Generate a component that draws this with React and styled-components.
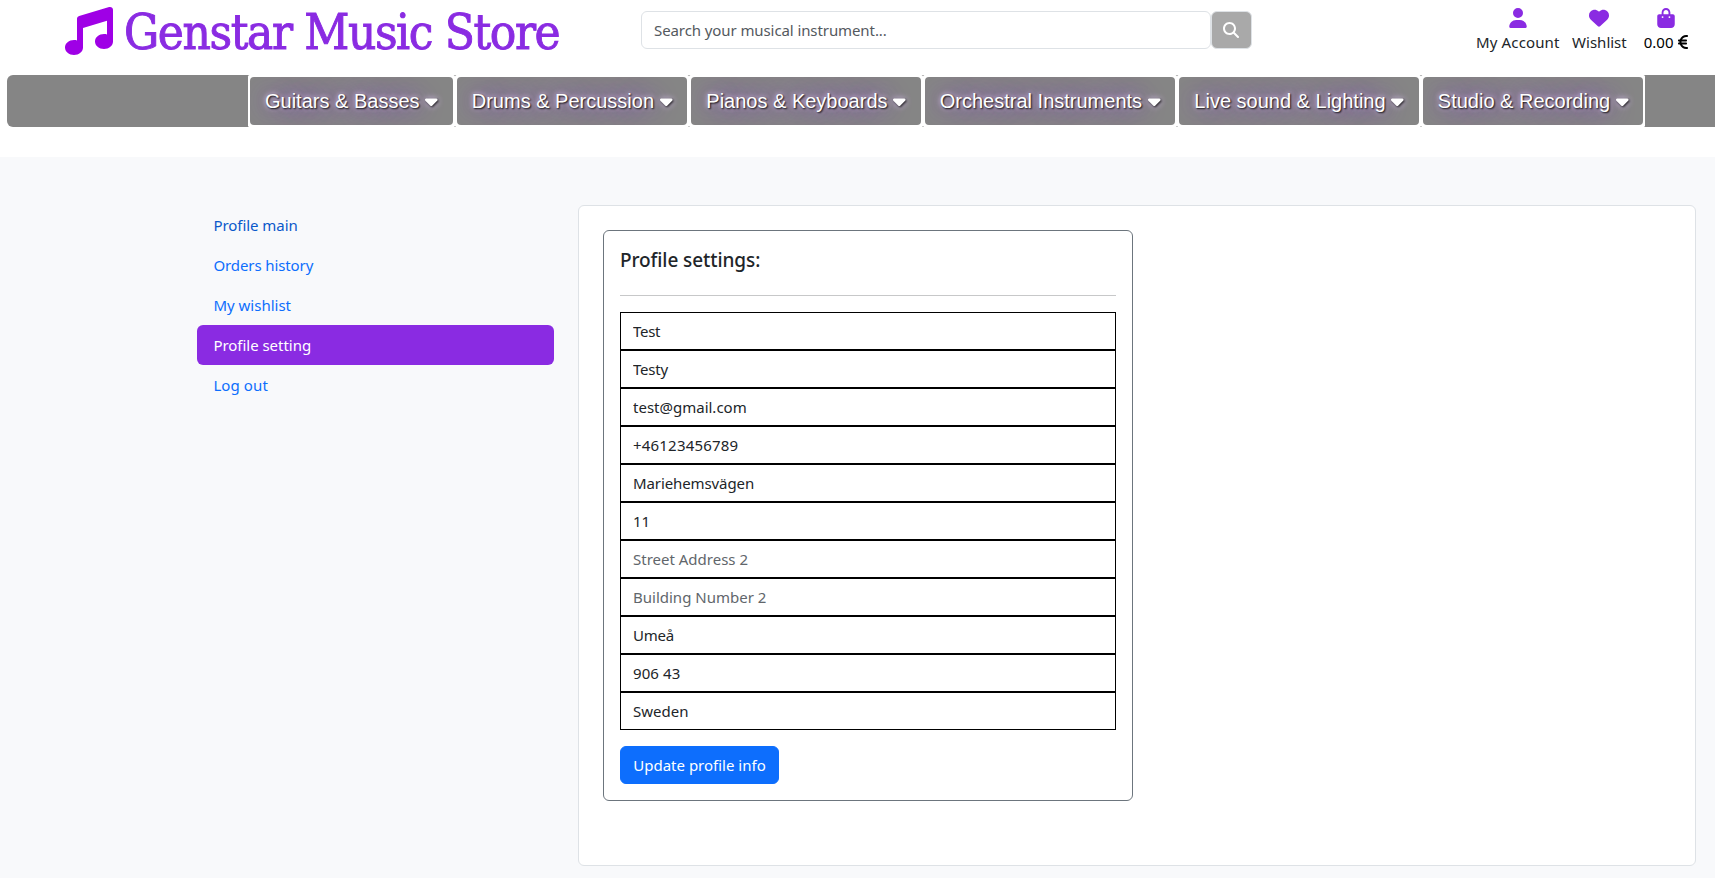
import React from 'react';
import styled, { createGlobalStyle } from 'styled-components';
import { FaMusic, FaMagnifyingGlass, FaUser, FaHeart, FaBagShopping, FaEuroSign, FaCaretDown } from 'react-icons/fa6';

const GlobalStyle = createGlobalStyle`
  *, *::before, *::after { box-sizing: border-box; }
  html, body { margin: 0; background: #fff; }
  body {
    font-family: "Noto Sans", "Open Sans", sans-serif;
    font-size: 15px;
    line-height: 24px;
    color: #212529;
    overflow: hidden;
  }
`;

const Page = styled.div`
  width: 1715px;
  height: 878px;
  display: flex;
  flex-direction: column;
  overflow: hidden;
`;

const Header = styled.header`
  height: 75px;
  flex: none;
  display: flex;
  align-items: flex-start;
  padding-left: 64.5px;
`;

const Brand = styled.a`
  width: 576.5px;
  flex: none;
  display: flex;
  align-items: flex-start;
  color: #8a2be2;
  svg { flex: none; margin-top: 7px; font-size: 48px; color: #9f00e6; }
`;

const BrandName = styled.span`
  margin-left: 11.5px;
  font-family: "DejaVu Serif Condensed", "DejaVu Serif", serif;
  font-stretch: condensed;
  font-size: 49px;
  line-height: 66px;
  letter-spacing: -1.4px;
  -webkit-text-stroke: 0.9px #8a2be2;
  white-space: nowrap;
`;

const SearchForm = styled.form`
  display: flex;
  width: 611px;
  margin-top: 11px;
  flex: none;
`;

const SearchInput = styled.input`
  flex: 1;
  min-width: 0;
  height: 38px;
  padding: 0 12px;
  border: 1px solid #dee2e6;
  border-radius: 6px;
  background: #fff;
  font: inherit;
  letter-spacing: -0.09px;
  color: #212529;
  &::placeholder { color: #54595e; opacity: 1; }
`;

const SearchButton = styled.button`
  width: 41px;
  height: 38px;
  display: flex;
  align-items: center;
  justify-content: center;
  border: 1px solid #dee2e6;
  border-radius: 6px;
  background: #a9a9a9;
  color: #fff;
  font-size: 16px;
  padding: 0 1px 0 0;
`;

const Actions = styled.nav`
  flex: 1;
  display: flex;
  justify-content: flex-end;
  padding: 7.5px 27.5px 0 0;
`;

const Action = styled.a`
  display: flex;
  flex-direction: column;
  align-items: center;
  margin-left: ${p => p.$gap}px;
  color: ${p => (p.$dark ? '#000' : '#212529')};
  letter-spacing: ${p => p.$track || 0}px;
  > svg { font-size: 20px; color: #8a2be2; }
`;

const ActionLabel = styled.span`
  display: flex;
  align-items: center;
  gap: 4px;
  height: 24px;
  margin-top: 2.5px;
  white-space: nowrap;
  svg { width: 10px; height: 16px; margin-top: 0; }
`;

const NavBar = styled.nav`
  height: 52px;
  flex: none;
  margin-left: 7px;
  padding-left: 241px;
  display: flex;
  background: #858585;
  border-radius: 6px 0 0 6px;
`;

const NavItem = styled.div`
  padding: 2px;
  background: #fff;
  border-radius: 1.5px;
`;

const NavButton = styled.button`
  height: 48px;
  display: block;
  padding: 0 15px;
  border: 0;
  border-radius: 4px;
  overflow: hidden;
  background: #858585;
  color: #fff;
  font: 20px/48px "Liberation Sans", Arial, sans-serif;
  white-space: pre;
  text-shadow: 1px 1px 2px #000, 0 0 25px #8a2be2, 0 0 5px #f3e3ff;
  svg {
    width: 12.5px;
    height: 20px;
    margin-left: 0.2px;
    vertical-align: -2.5px;
    overflow: visible;
    filter: drop-shadow(1px 1px 1px rgba(0, 0, 0, 0.8)) drop-shadow(0 0 3px rgba(230, 200, 255, 0.7));
  }
`;

const Main = styled.main`
  flex: 1;
  margin-top: 30px;
  padding: 48px 19px 12px 197px;
  display: flex;
  gap: 24px;
  background: #f8f9fb;
`;

const Sidebar = styled.aside`
  width: 357px;
  flex: none;
  display: flex;
  flex-direction: column;
`;

const SideLink = styled.a`
  height: 40px;
  padding: 8px 16.4px;
  border-radius: 6px;
  background: ${p => (p.$active ? '#8a2be2' : 'transparent')};
  color: ${p => (p.$active ? '#fff' : p.$hover ? '#0a58ca' : '#0d6efd')};
  letter-spacing: ${p => p.$track || 0}px;
`;

const Panel = styled.section`
  flex: 1;
  padding: 24px;
  border: 1px solid #dee2e6;
  border-radius: 6px;
  background: #fff;
`;

const SettingsCard = styled.form`
  width: 530px;
  height: 571px;
  padding: 16px;
  border: 1px solid #6c757d;
  border-radius: 6px;
  display: flex;
  flex-direction: column;
  align-items: flex-start;
`;

const CardTitle = styled.h5`
  margin: 0;
  height: 48px;
  font-size: 19px;
  font-weight: 500;
  line-height: 26px;
  letter-spacing: -0.08px;
`;

const Divider = styled.hr`
  width: 100%;
  height: 1px;
  margin: 0 0 16px;
  border: 0;
  background: #c7c8c9;
`;

const Field = styled.input`
  width: 100%;
  height: 38px;
  flex: none;
  padding: 0 12px;
  border: 1px solid #000;
  border-radius: 0;
  background: #fff;
  font: inherit;
  color: #212529;
  letter-spacing: ${p => p.$track || 0}px;
  &::placeholder { color: #61666b; opacity: 1; }
`;

const SubmitButton = styled.button`
  width: 159px;
  height: 38px;
  margin-top: 16px;
  padding: 0 12px;
  border: 1px solid #0d6efd;
  border-radius: 6px;
  background: #0d6efd;
  color: #fff;
  font: inherit;
  white-space: nowrap;
`;

const categories = [
  'Guitars & Basses',
  'Drums & Percussion',
  'Pianos & Keyboards',
  'Orchestral Instruments',
  'Live sound & Lighting',
  'Studio & Recording',
];

const links = [
  { label: 'Profile main', hover: true, track: -0.05 },
  { label: 'Orders history', track: -0.1 },
  { label: 'My wishlist' },
  { label: 'Profile setting', active: true, track: -0.03 },
  { label: 'Log out', track: 0.1 },
];

const fields = [
  { value: 'Test', track: -0.3 },
  { value: 'Testy', track: -0.2 },
  { value: 'test@gmail.com' },
  { value: '+46123456789', track: 0.2 },
  { value: 'Mariehemsvägen', track: -0.1 },
  { value: '11' },
  { placeholder: 'Street Address 2' },
  { placeholder: 'Building Number 2' },
  { value: 'Umeå', track: -0.2 },
  { value: '906 43', track: 0.1 },
  { value: 'Sweden' },
];

export default function App() {
  return (
    <Page>
      <GlobalStyle />
      <Header>
        <Brand>
          <FaMusic />
          <BrandName>Genstar Music Store</BrandName>
        </Brand>
        <SearchForm>
          <SearchInput placeholder="Search your musical instrument..." />
          <SearchButton type="button" aria-label="Search"><FaMagnifyingGlass /></SearchButton>
        </SearchForm>
        <Actions>
          <Action $gap={0} $track={0.15}><FaUser /><ActionLabel>My Account</ActionLabel></Action>
          <Action $gap={12.5}><FaHeart /><ActionLabel>Wishlist</ActionLabel></Action>
          <Action $gap={17} $dark><FaBagShopping /><ActionLabel>0.00<FaEuroSign /></ActionLabel></Action>
        </Actions>
      </Header>
      <NavBar>
        {categories.map(name => (
          <NavItem key={name}>
            <NavButton type="button">{name} <FaCaretDown /></NavButton>
          </NavItem>
        ))}
      </NavBar>
      <Main>
        <Sidebar>
          {links.map(l => (
            <SideLink key={l.label} $active={l.active} $hover={l.hover} $track={l.track}>{l.label}</SideLink>
          ))}
        </Sidebar>
        <Panel>
          <SettingsCard>
            <CardTitle>Profile settings:</CardTitle>
            <Divider />
            {fields.map(f => (
              <Field key={f.value || f.placeholder} defaultValue={f.value} placeholder={f.placeholder} $track={f.track} />
            ))}
            <SubmitButton type="button">Update profile info</SubmitButton>
          </SettingsCard>
        </Panel>
      </Main>
    </Page>
  );
}
